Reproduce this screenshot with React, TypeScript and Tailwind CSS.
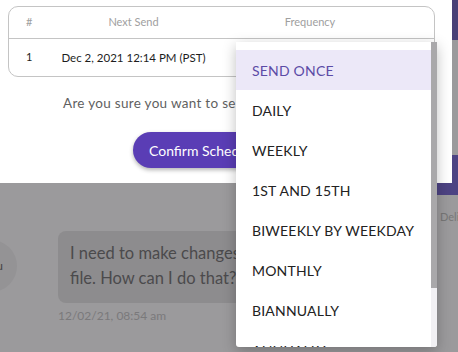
const OPTIONS = [
  "Send once",
  "Daily",
  "Weekly",
  "1st and 15th",
  "Biweekly by weekday",
  "Monthly",
  "Biannually",
  "Annually",
];

function FrequencyMenu() {
  return (
    <div className="absolute left-[236px] top-[42px] w-[201px] h-[305px] bg-white shadow-[0_4px_14px_rgba(0,0,0,0.25)] rounded-b-[3px] overflow-hidden flex">
      <ul className="flex-1 pt-[8px]">
        {OPTIONS.map((opt, i) => (
          <li
            key={opt}
            className={`h-[40px] flex items-center pl-[16px] text-[14px] uppercase tracking-[0.2px] ${
              i === 0 ? "bg-[#ece8f8] text-[#5b4ba6]" : "text-[#222]"
            }`}
          >
            {opt}
          </li>
        ))}
      </ul>
      <div className="w-[6px] flex flex-col">
        <div className="h-[246px] bg-[#a9a8aa]" />
        <div className="flex-1 bg-[#f1f0f3]" />
      </div>
    </div>
  );
}

function ScheduleModal() {
  return (
    <div className="w-[452px] bg-white pt-[6px] px-[8px]">
      <div className="w-[427px] border border-[#c4c4c4] rounded-[10px] text-[11px]">
        <div className="h-[32px] flex items-center border-b border-[#c4c4c4] text-[#a0a0a0]">
          <div className="w-[36px] pl-[17px]">#</div>
          <div className="w-[177px] text-center">Next Send</div>
          <div className="w-[176px] text-center">Frequency</div>
        </div>
        <div className="h-[37px] flex items-center text-[#1d1d1d]">
          <div className="w-[36px] pl-[17px]">1</div>
          <div className="w-[177px] text-center text-[11.5px]">Dec 2, 2021 12:14 PM (PST)</div>
          <div className="w-[176px]" />
        </div>
      </div>
      <p className="mt-[17px] pl-[55px] text-[13.5px] tracking-[0.3px] leading-[18px] text-[#5f5f5f] whitespace-nowrap">
        Are you sure you want to send this message?
      </p>
      <div className="mt-[20px] pl-[125px]">
        <button className="h-[36px] px-[16px] rounded-full bg-[#5a3db5] text-white text-[14px] shadow-[0_2px_4px_rgba(0,0,0,0.3)] whitespace-nowrap">
          Confirm Schedule
        </button>
      </div>
    </div>
  );
}

export default function App() {
  return (
    <div
      className="relative w-[458px] h-[352px] overflow-hidden bg-[#9b9a9c] flex flex-col"
      style={{ fontFamily: "Lato, 'Noto Sans', sans-serif" }}
    >
      <div className="h-[183px] flex">
        <ScheduleModal />
        <div className="flex-1 flex flex-col">
          <div className="h-[40px] bg-[#4a4077]" />
          <div className="h-[115px] bg-[#9b9a9c]" />
          <div className="flex-1 bg-[#4d4383]" />
        </div>
      </div>
      <div className="flex-1 flex">
        <div className="flex-1 relative">
          <div className="absolute left-[-35px] top-[57px] w-[52px] h-[52px] rounded-full bg-[#949395] flex items-center justify-end pr-[14px] text-[12px] text-[#444]">
            u
          </div>
          <div className="ml-[58px] mt-[48px] w-[240px] h-[72px] rounded-[8px] bg-[#8d8c8e] pl-[12px] pt-[10px] text-[16.5px] leading-[25px] text-[#4b4a4c] whitespace-nowrap">
            <div>I need to make changes to the</div>
            <div>file. How can I do that?</div>
          </div>
          <div className="ml-[58px] mt-[4px] text-[12px] text-[#7a797b]">12/02/21, 08:54 am</div>
        </div>
        <div className="w-[21px] flex flex-col">
          <div className="h-[12px] bg-[#4d4383]" />
          <div className="mt-[14px] pl-[3px] text-[11px] text-[#777] whitespace-nowrap">Delivered</div>
        </div>
      </div>
      <FrequencyMenu />
    </div>
  );
}
